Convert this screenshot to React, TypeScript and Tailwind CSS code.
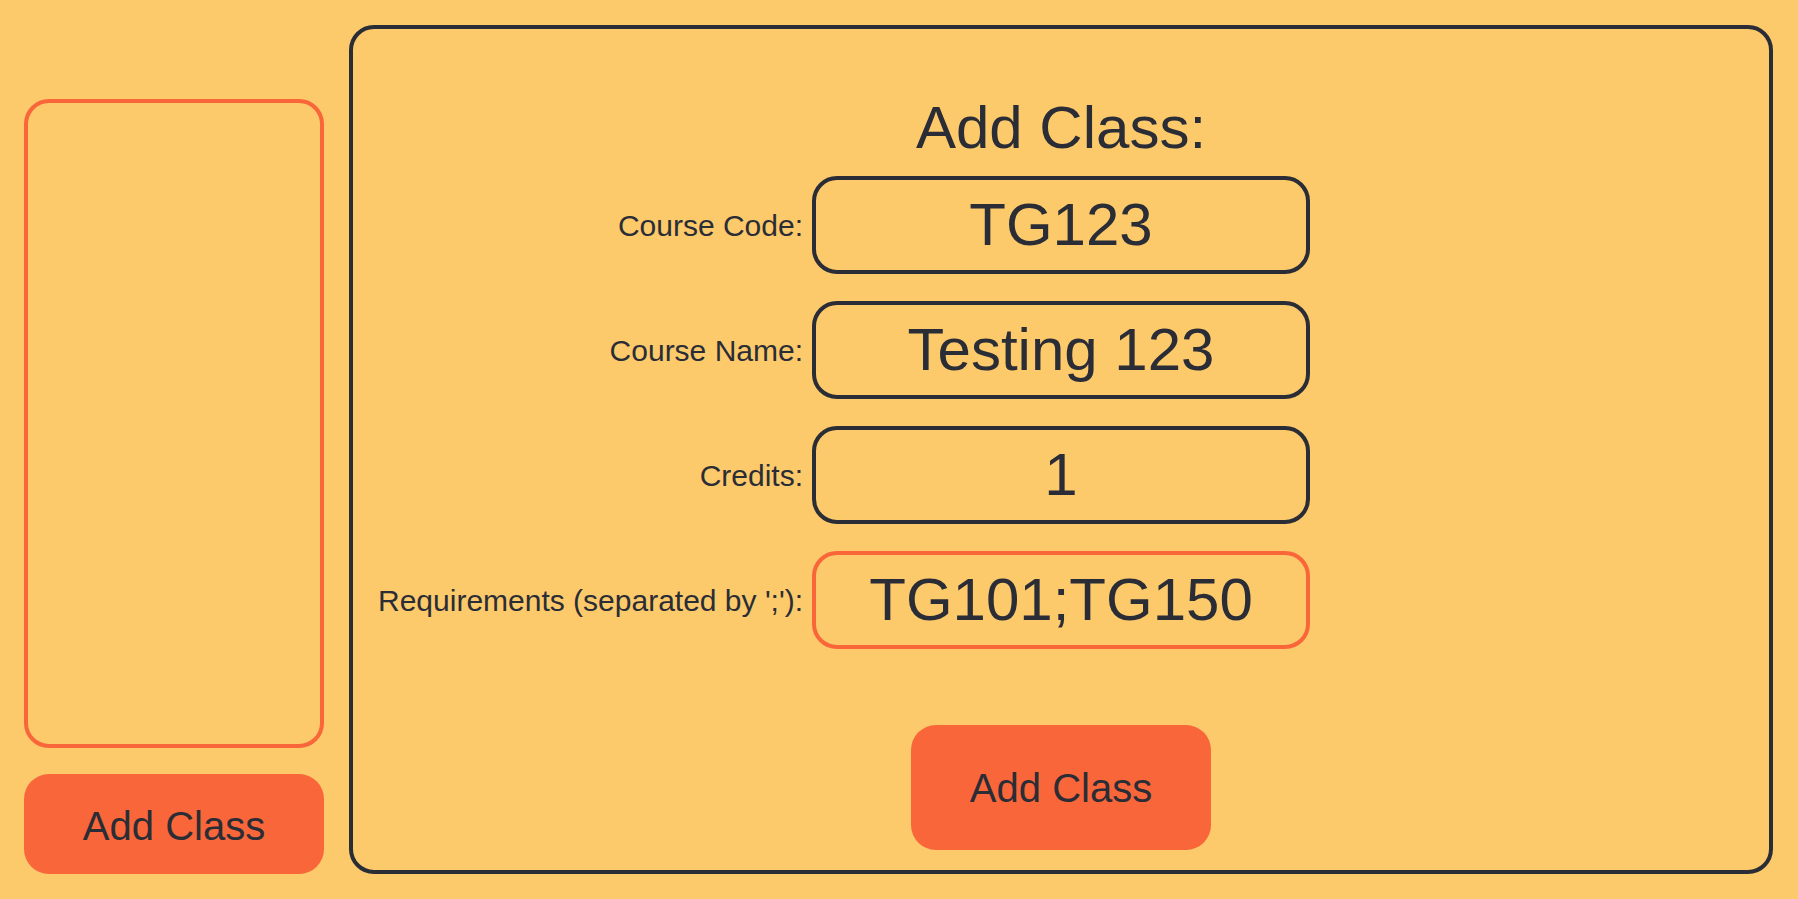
export default function App() {
  const fields = [
    ["Course Code:", "TG123", false],
    ["Course Name:", "Testing 123", false],
    ["Credits:", "1", false],
    ["Requirements (separated by ';'):", "TG101;TG150", true],
  ] as const;

  return (
    <div className="flex h-[899px] w-full gap-[25px] bg-[#fcc96b] pl-[24px] pr-[25px] py-[25px] font-['Liberation_Sans',Arial,sans-serif] text-[#2a2d35]">
      <div className="flex w-[300px] shrink-0 flex-col justify-end gap-[26px]">
        <div className="h-[649px] rounded-[25px] border-4 border-[#f9663a]"></div>
        <button className="h-[100px] rounded-[25px] bg-[#f9663a] pt-[3px] text-[40px]">
          Add Class
        </button>
      </div>

      <div className="flex flex-1 flex-col items-center rounded-[25px] border-4 border-[#2a2d35] pt-[64px]">
        <div className="text-[60px] leading-[69px]">Add Class:</div>
        <div className="mt-[14px] grid w-full grid-cols-[1fr_498px_1fr] gap-y-[27px]">
          {fields.map(([label, value, active], i) => (
            <div key={i} className="contents">
              <div className="self-center justify-self-end pr-[9px] text-[30px]">
                {label}
              </div>
              <div
                className={
                  active
                    ? "flex h-[98px] items-center justify-center rounded-[25px] border-4 border-[#f9663a] text-[60px]"
                    : "flex h-[98px] items-center justify-center rounded-[25px] border-4 border-[#2a2d35] text-[60px]"
                }
              >
                {value}
              </div>
              <div></div>
            </div>
          ))}
        </div>
        <button className="mt-[76px] h-[125px] w-[300px] rounded-[25px] bg-[#f9663a] text-[40px]">
          Add Class
        </button>
      </div>
    </div>
  );
}
